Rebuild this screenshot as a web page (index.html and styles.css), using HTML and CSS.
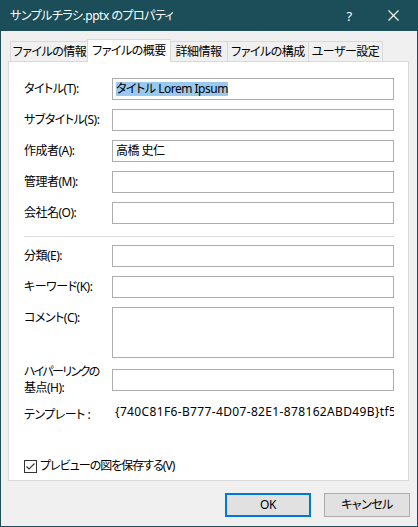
FILE: index.html
```html
<!DOCTYPE html>
<html lang="ja">
<head>
    <meta charset="UTF-8">
    <title>サンプルチラシ.pptx のプロパティ</title>
    <link rel="stylesheet" href="styles.css">
</head>
<body>
    <div class="window">
        <div class="titlebar">
            <span class="title">サンプルチラシ.pptx のプロパティ</span>
            <span class="help">?</span>
            <svg class="close" width="11" height="11" viewBox="0 0 11 11">
                <path d="M0.5 0.5L10.5 10.5M10.5 0.5L0.5 10.5" stroke="#fff" stroke-width="1.1" fill="none"/>
            </svg>
        </div>
        <div class="content">
            <div class="tabs">
                <div class="tab t1">ファイルの情報</div>
                <div class="tab t2 active">ファイルの概要</div>
                <div class="tab t3">詳細情報</div>
                <div class="tab t4">ファイルの構成</div>
                <div class="tab t5">ユーザー設定</div>
            </div>
            <div class="panel">
                <div class="row">
                    <div class="label">タイトル(T):</div>
                    <div class="field"><span class="sel">タイトル Lorem Ipsum</span></div>
                </div>
                <div class="row">
                    <div class="label">サブタイトル(S):</div>
                    <div class="field"></div>
                </div>
                <div class="row">
                    <div class="label">作成者(A):</div>
                    <div class="field">高橋 史仁</div>
                </div>
                <div class="row">
                    <div class="label">管理者(M):</div>
                    <div class="field"></div>
                </div>
                <div class="row">
                    <div class="label">会社名(O):</div>
                    <div class="field"></div>
                </div>
                <div class="sep"></div>
                <div class="row">
                    <div class="label">分類(E):</div>
                    <div class="field"></div>
                </div>
                <div class="row">
                    <div class="label">キーワード(K):</div>
                    <div class="field"></div>
                </div>
                <div class="row">
                    <div class="label">コメント(C):</div>
                    <div class="field tall"></div>
                </div>
                <div class="row link">
                    <div class="label two">
                        <div class="tight">ハイパーリンクの</div>
                        <div>基点(H):</div>
                    </div>
                    <div class="field"></div>
                </div>
                <div class="row tmpl">
                    <div class="label">テンプレート :</div>
                    <div class="value">{740C81F6-B777-4D07-82E1-878162ABD49B}tf56312345</div>
                </div>
                <div class="check">
                    <svg class="box" width="13" height="13" viewBox="0 0 13 13">
                        <rect x="0.5" y="0.5" width="12" height="12" fill="#fff" stroke="#333"/>
                        <path d="M2.5 6.5L5 9L10.5 3.5" stroke="#333" stroke-width="1.1" fill="none"/>
                    </svg>
                    <span class="check-text">プレビューの図を保存する(V)</span>
                </div>
            </div>
            <div class="buttons">
                <div class="btn ok">OK</div>
                <div class="btn">キャンセル</div>
            </div>
        </div>
    </div>
</body>
</html>
```

FILE: styles.css
```css
body {
    margin: 0;
    font-family: "Noto Sans", "Noto Sans CJK JP", sans-serif;
    font-size: 12px;
    font-feature-settings: "palt";
    letter-spacing: -0.5px;
    color: #000;
    background: #1b4e58;
}
.window {
    width: 418px;
    height: 527px;
    box-sizing: border-box;
    border: 1px solid #1b4e58;
    border-top: none;
    background: #f0f0f0;
    display: flex;
    flex-direction: column;
}
.titlebar {
    height: 31px;
    flex-shrink: 0;
    background: #1b4e58;
    color: #fff;
    display: flex;
    align-items: center;
    padding-left: 9px;
}
.title {
    flex: 1;
    line-height: 16px;
}
.help {
    width: 20px;
    text-align: center;
    margin-right: 29px;
    font-size: 13px;
}
.close {
    margin-right: 18px;
}
.content {
    flex: 1;
    display: flex;
    flex-direction: column;
    padding: 8px 0 0 7px;
}
.tabs {
    display: flex;
    align-items: flex-end;
    height: 22px;
    flex-shrink: 0;
    padding-left: 2px;
}
.tab {
    height: 20px;
    box-sizing: border-box;
    border: 1px solid #d9d9d9;
    border-bottom: none;
    margin-right: -1px;
    background: #f0f0f0;
    text-align: center;
    line-height: 19px;
    white-space: nowrap;
}
.t1 { width: 79px; }
.t2 { width: 84px; }
.t3 { width: 59px; }
.t4 { width: 82px; }
.t5 { width: 75px; }
.tab.active {
    height: 23px;
    margin-bottom: -1px;
    margin-left: -1px;
    margin-right: -2px;
    background: #fff;
    position: relative;
    z-index: 1;
    line-height: 21px;
}
.panel {
    width: 401px;
    height: 420px;
    flex-shrink: 0;
    box-sizing: border-box;
    border: 1px solid #d9d9d9;
    background: #fff;
    padding: 16px 13px 0 15px;
    display: flex;
    flex-direction: column;
}
.panel > * {
    flex-shrink: 0;
}
.row {
    display: flex;
    align-items: flex-start;
    margin-bottom: 9px;
}
.label {
    width: 88px;
    line-height: 22px;
    white-space: nowrap;
}
.field {
    width: 282px;
    height: 22px;
    box-sizing: border-box;
    border: 1px solid #adadad;
    padding: 3px 3px 0 3px;
    line-height: 14px;
}
.field.tall {
    height: 51px;
}
.sel {
    background: #99c9ef;
    display: inline-block;
    line-height: 14px;
}
.sep {
    height: 1px;
    background: #dcdcdc;
    width: 370px;
    margin: 3px 0 8px;
}
.row.link {
    margin-top: 2px;
    height: 22px;
    align-items: center;
}
.label.two {
    line-height: 16px;
}
.tight {
    letter-spacing: -1.6px;
}
.row.tmpl {
    margin-top: 4px;
    margin-bottom: 0;
}
.value {
    width: 279px;
    padding-left: 3px;
    overflow: hidden;
    white-space: nowrap;
    line-height: 16px;
    letter-spacing: 0.35px;
}
.check {
    display: flex;
    align-items: center;
    margin-top: 32px;
    line-height: 16px;
}
.check-text {
    letter-spacing: -1px;
}
.box {
    margin-right: 3px;
}
.buttons {
    display: flex;
    justify-content: flex-end;
    gap: 13px;
    margin-top: 12px;
    padding-right: 7px;
}
.btn {
    width: 86px;
    height: 24px;
    box-sizing: border-box;
    border: 1px solid #adadad;
    background: #e1e1e1;
    text-align: center;
    line-height: 21px;
}
.btn.ok {
    border: 2px solid #0078d7;
    line-height: 19px;
}
```
